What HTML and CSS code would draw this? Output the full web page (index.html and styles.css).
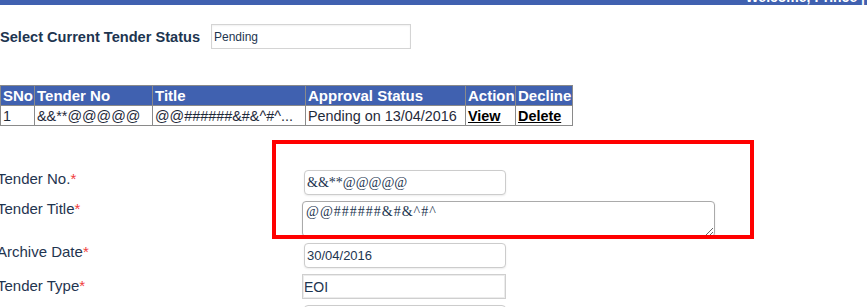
FILE: index.html
```html
<!DOCTYPE html>
<html lang="en">
<head>
    <meta charset="UTF-8">
    <title>Tender Status</title>
    <link rel="stylesheet" href="styles.css">
</head>
<body>
    <div class="topbar">
        <span class="welcome">Welcome, Prince |</span>
    </div>

    <div class="status-row">
        <label class="status-label">Select Current Tender Status</label>
        <input class="status-input" type="text" value="Pending">
    </div>

    <table class="tender-table">
        <colgroup>
            <col style="width:34px">
            <col style="width:118px">
            <col style="width:153px">
            <col style="width:160px">
            <col style="width:50px">
            <col style="width:57px">
        </colgroup>
        <tr>
            <th>SNo</th>
            <th>Tender No</th>
            <th>Title</th>
            <th>Approval Status</th>
            <th>Action</th>
            <th>Decline</th>
        </tr>
        <tr>
            <td>1</td>
            <td>&amp;&amp;**@@@@@</td>
            <td class="clip">@@######&amp;#&amp;^#^...</td>
            <td>Pending on 13/04/2016</td>
            <td><a href="#">View</a></td>
            <td><a href="#">Delete</a></td>
        </tr>
    </table>

    <div class="form-wrap">
        <div class="highlight"></div>
        <div class="form">
            <div class="form-label lbl-no">Tender No.<span class="req">*</span></div>
            <div><input class="field serif" type="text" value="&amp;&amp;**@@@@@"></div>

            <div class="form-label lbl-title">Tender Title<span class="req">*</span></div>
            <div><textarea class="area serif">@@######&amp;#&amp;^#^</textarea></div>

            <div class="form-label lbl-date">Archive Date<span class="req">*</span></div>
            <div><input class="field" type="text" value="30/04/2016"></div>

            <div class="form-label lbl-type">Tender Type<span class="req">*</span></div>
            <div><input class="field square" type="text" value="EOI"></div>

            <div class="form-label"></div>
            <div><input class="field" type="text" value=""></div>
        </div>
    </div>
</body>
</html>
```

FILE: styles.css
```css
* {
    box-sizing: border-box;
}
body {
    margin: 0;
    font-family: "Liberation Sans", Arial, sans-serif;
    background: #fff;
    overflow: hidden;
}
.topbar {
    height: 5px;
    background: #4061b0;
    overflow: hidden;
    text-align: right;
    padding-right: 2px;
}
.welcome {
    display: inline-block;
    color: #fff;
    font-weight: bold;
    font-size: 14px;
    line-height: 14px;
    margin-top: -10px;
    vertical-align: top;
}
.status-row {
    display: flex;
    align-items: center;
    margin-top: 19px;
    height: 25px;
}
.status-label {
    font-weight: bold;
    font-size: 14.6px;
    color: #1d3550;
    width: 211px;
}
.status-input {
    width: 200px;
    height: 25px;
    border: 1px solid #d4d4d4;
    box-shadow: inset 0 1px 2px rgba(0, 0, 0, 0.06);
    font-family: "Liberation Sans", Arial, sans-serif;
    font-size: 12px;
    color: #1d3550;
    padding: 0 2px;
}
.tender-table {
    margin-top: 36px;
    border-collapse: collapse;
    table-layout: fixed;
    width: 572px;
    border: 1px solid #8a8a8a;
}
.tender-table th,
.tender-table td {
    border: 1px solid #8a8a8a;
    height: 20px;
    padding: 0 2px;
    text-align: left;
    white-space: nowrap;
    overflow: hidden;
}
.tender-table th {
    background: #4061b0;
    color: #fff;
    font-weight: bold;
    font-size: 15px;
}
.tender-table td {
    color: #1f2a3a;
    font-size: 14.4px;
}
.tender-table a {
    color: #000;
    font-weight: bold;
}
.form-wrap {
    position: relative;
    margin-top: 44px;
    margin-left: -3px;
}
.highlight {
    position: absolute;
    left: 275px;
    top: -30px;
    width: 482px;
    height: 99px;
    border: 4px solid #f00;
    pointer-events: none;
}
.form {
    display: grid;
    grid-template-columns: 305px auto;
    row-gap: 6px;
}
.form-label {
    font-size: 15px;
    color: #1f3550;
    line-height: 18px;
}
.lbl-no { margin-top: 0; }
.lbl-title { margin-top: -1px; }
.lbl-date { margin-top: 0; }
.lbl-type { margin-top: 3px; }
.req {
    color: #f03c3c;
}
.field {
    width: 202px;
    height: 25px;
    margin-left: 2px;
    border: 1px solid #ccc;
    border-radius: 4px;
    box-shadow: 0 1px 2px rgba(0, 0, 0, 0.08);
    font-family: "Liberation Sans", Arial, sans-serif;
    font-size: 13px;
    color: #1d3550;
    padding: 0 2px;
}
.field.square {
    width: 204px;
    margin-left: 0;
    border-radius: 0;
    border: 1px solid #cfcfcf;
    box-shadow: inset 0 0 0 1px #ececec;
    font-size: 14px;
    padding: 0 1px;
}
.serif {
    font-family: "Liberation Serif", "Times New Roman", serif;
    font-size: 14px;
}
.area {
    display: block;
    width: 413px;
    height: 36px;
    border: 1px solid #aaa;
    border-radius: 4px;
    box-shadow: 0 1px 2px rgba(0, 0, 0, 0.1);
    color: #1d3550;
    padding: 2px 3px;
    letter-spacing: 1px;
    resize: both;
    margin-top: 0;
}
```
